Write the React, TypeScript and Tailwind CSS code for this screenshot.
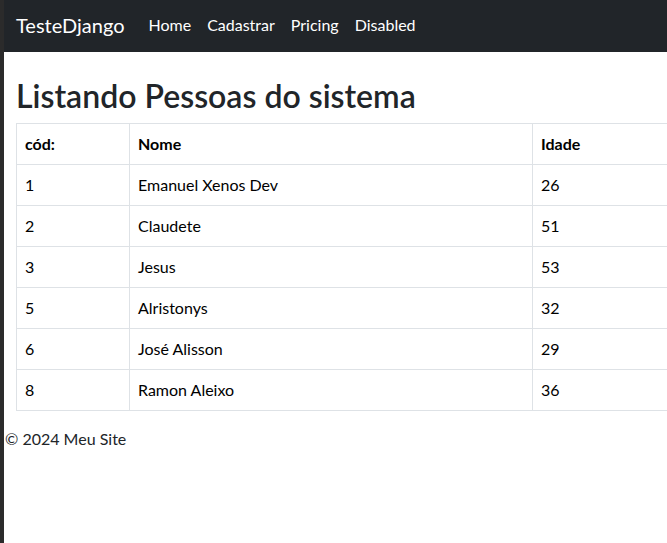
const people = [
  { id: 1, nome: "Emanuel Xenos Dev", idade: 26 },
  { id: 2, nome: "Claudete", idade: 51 },
  { id: 3, nome: "Jesus", idade: 53 },
  { id: 5, nome: "Alristonys", idade: 32 },
  { id: 6, nome: "José Alisson", idade: 29 },
  { id: 8, nome: "Ramon Aleixo", idade: 36 },
];

const links = ["Home", "Cadastrar", "Pricing", "Disabled"];

export default function App() {
  return (
    <div
      className="flex h-[543px] w-[667px] overflow-hidden bg-[#2b2b2b]"
      style={{ fontFamily: 'Lato, "Noto Sans", sans-serif' }}
    >
      {/* window edge */}
      <div className="w-[4px] shrink-0 bg-[#2b2b2b]" />

      <div className="flex-1 min-w-0 bg-white text-[#212529]">
        {/* Navbar */}
        <nav className="h-[52px] bg-[#212529] flex items-center px-3 pb-[2px]">
          <span className="text-[20px] text-white mr-4 leading-[30px]">TesteDjango</span>
          <ul className="flex items-center">
            {links.map((l) => (
              <li key={l}>
                <a className="px-2 text-[16px] text-white leading-6">{l}</a>
              </li>
            ))}
          </ul>
        </nav>

        {/* Content */}
        <div className="px-3 mt-[25px]">
          <h1 className="text-[32px] font-semibold leading-[38px] mb-2">Listando Pessoas do sistema</h1>
          <table className="w-[760px] border-collapse text-[16px] leading-6 text-black mb-4">
            <thead>
              <tr>
                <th className="w-[113px] border border-[#dee2e6] px-2 py-2 text-left font-bold">cód:</th>
                <th className="w-[403px] border border-[#dee2e6] px-2 py-2 text-left font-bold">Nome</th>
                <th className="border border-[#dee2e6] px-2 py-2 text-left font-bold">Idade</th>
              </tr>
            </thead>
            <tbody>
              {people.map((p) => (
                <tr key={p.id}>
                  <td className="border border-[#dee2e6] px-2 py-2">{p.id}</td>
                  <td className="border border-[#dee2e6] px-2 py-2">{p.nome}</td>
                  <td className="border border-[#dee2e6] px-2 py-2">{p.idade}</td>
                </tr>
              ))}
            </tbody>
          </table>
        </div>

        {/* Footer */}
        <footer className="text-[16px] leading-6 px-[1px]">© 2024 Meu Site</footer>
      </div>
    </div>
  );
}
